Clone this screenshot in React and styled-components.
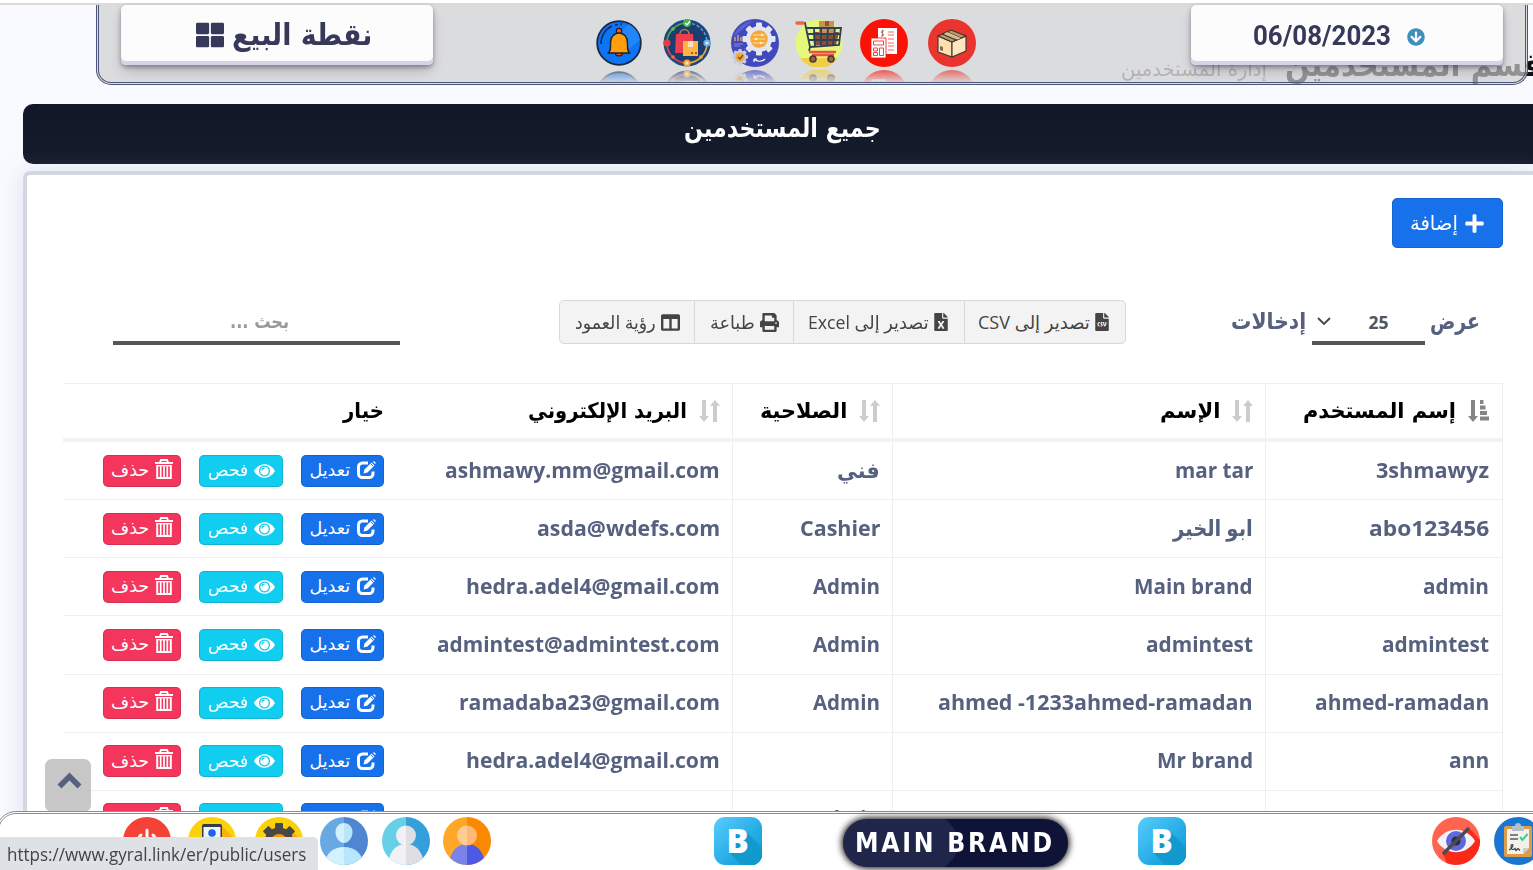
import React, { useLayoutEffect, useRef, useState } from "react";
import styled, { createGlobalStyle, css } from "styled-components";
import { FaPlus, FaFileCsv, FaFileExcel, FaPrint, FaColumns, FaArrowCircleDown, FaThLarge } from "react-icons/fa";

const Global = createGlobalStyle`
  *{box-sizing:border-box}
  html,body{margin:0;padding:0;overflow:hidden}
  body{font-family:"Open Sans","DejaVu Sans",sans-serif;background:#fff}
  svg{display:block;flex:none}
`;

/* Text set to a fixed measure, independent of the font's own widths */
const Measure = styled.span`
  display: inline-block;
  flex: none;
  direction: ltr;
  text-align: left;
  white-space: nowrap;
  width: ${(p) => p.$w}px;
`;
const Inner = styled.span`
  display: inline-block;
  transform-origin: left center;
  unicode-bidi: isolate;
`;
function Fit({ w, children, dir = "rtl" }) {
  const ref = useRef(null);
  const [scale, setScale] = useState(1);
  useLayoutEffect(() => {
    setScale(w / ref.current.offsetWidth);
  }, [w, children]);
  return (
    <Measure $w={w}>
      <Inner ref={ref} dir={dir} style={{ transform: `scaleX(${scale})` }}>{children}</Inner>
    </Measure>
  );
}

const Page = styled.div`
  position: relative;
  width: 1533px;
  height: 870px;
  overflow: hidden;
  background: #f8faff;
`;
const TopEdge = styled.div`
  position: absolute;
  inset: 0 0 auto 0;
  height: 5px;
  background: #dadadb;
  border-top: 3px solid #fff;
`;
const Header = styled.header`
  position: absolute;
  top: 5px;
  left: 96px;
  width: 1432px;
  height: 80px;
  display: flex;
  align-items: flex-start;
  border: 3px double #4d5578;
  border-top: 0;
  border-radius: 0 0 15px 15px;
  background: rgba(206, 206, 207, 0.69);
  padding: 0 22px;
`;
const HeaderButton = styled.div`
  width: 312px;
  height: 60px;
  flex: none;
  display: flex;
  align-items: center;
  justify-content: center;
  gap: ${(p) => p.$gap}px;
  padding: ${(p) => p.$pad};
  border-radius: 5px;
  background: #fcfcfd;
  color: #36395a;
  font: 700 ${(p) => p.$size}px/1 ${(p) => p.$family};
  box-shadow: rgba(45, 35, 66, 0.4) 0 2px 4px, rgba(45, 35, 66, 0.3) 0 7px 13px -3px, #d6d3e7 0 -4px 0 inset;
`;
const Shortcuts = styled.div`
  flex: 1;
  height: 77px;
  overflow: hidden;
  padding: 14px 0 0 162px;
  display: flex;
  align-items: flex-start;
  svg {
    -webkit-box-reflect: below 3px linear-gradient(to bottom, transparent 72%, rgba(0, 0, 0, 0.65) 100%);
  }
`;
const Spaced = styled.div`
  flex: none;
  margin-left: ${(p) => p.$l}px;
`;

const Crumbs = styled.div`
  height: 104px;
  display: flex;
  direction: rtl;
  align-items: flex-start;
  padding: 47px 0 0;
  margin-right: -9px;
  gap: 18px;
`;
const CrumbTitle = styled.h1`
  margin: 0;
  font: 700 32px/36px "DejaVu Sans", sans-serif;
  color: #111;
`;
const CrumbSub = styled.span`
  font: 400 20px/36px "DejaVu Sans", sans-serif;
  padding-top: 4px;
  color: #777;
`;
const Banner = styled.div`
  height: 60px;
  margin-left: 23px;
  border-radius: 10px 0 0 10px;
  background: linear-gradient(#101827, #151c2b);
  color: #fff;
  padding: 5px 0 0 661px;
  font: 700 26px/38px "DejaVu Sans", sans-serif;
`;
const Card = styled.section`
  margin: 7px 0 0 23px;
  height: 760px;
  border: 4px solid #d3d7e0;
  border-right: 0;
  border-radius: 7px 0 0 0;
  background: #fff;
  box-shadow: 0 0 26px rgba(130, 140, 190, 0.22);
  padding: 23px 30px 0 36px;
`;
const AddButton = styled.button`
  width: 111px;
  height: 50px;
  margin: 0 0 0 auto;
  padding: 0;
  display: flex;
  align-items: center;
  justify-content: center;
  gap: 6px;
  border: 1px solid #1464d4;
  border-radius: 5px;
  background: #1771ea;
  color: #fff;
  font: 400 20px/1 "DejaVu Sans", sans-serif;
`;
const Tools = styled.div`
  margin-top: 52px;
  height: 45px;
  display: flex;
  align-items: flex-start;
`;
const Search = styled.div`
  width: 287px;
  height: 45px;
  margin: 0 159px 0 50px;
  padding: 4px 0 0 117px;
  border-bottom: 4px solid #555;
  color: #999;
  font: 700 19px/34px "DejaVu Sans", sans-serif;
`;
const Exports = styled.div`
  display: flex;
  width: 567px;
  height: 44px;
  flex: none;
  border: 1px solid #d8d8d8;
  border-radius: 5px;
  background: #f3f3f3;
  color: #444;
  font: 400 18px/1 "Open Sans", "DejaVu Sans", sans-serif;
`;
const ExportButton = styled.div`
  width: ${(p) => p.$w}px;
  flex: none;
  display: flex;
  align-items: center;
  justify-content: flex-end;
  gap: ${(p) => p.$gap || 5}px;
  padding-right: 14px;
  & + & {
    border-left: 1px solid #d8d8d8;
  }
`;
const Length = styled.div`
  display: flex;
  margin-left: 105px;
  height: 45px;
  gap: 5.5px;
  color: #56607f;
  font: 700 23px/43px "DejaVu Sans", sans-serif;
`;
const Select = styled.div`
  width: 113px;
  height: 45px;
  display: flex;
  align-items: center;
  padding: 5px 36px 0 5px;
  justify-content: space-between;
  border-bottom: 4px solid #555;
  color: #555;
  font: 700 17.5px/1 "Open Sans", sans-serif;
  svg {
    margin-top: -4px;
  }
`;

const Table = styled.div`
  margin-top: 38px;
  width: 1440px;
  border-top: 1px solid #efeff1;
  border-right: 1px solid #f0f0f2;
`;
const Cell = styled.div`
  display: flex;
  align-items: center;
  justify-content: flex-end;
  gap: ${(p) => p.$gap || 12}px;
  padding: 0 12px 4px 0;
  border-right: ${(p) => (p.$plain ? 0 : 1)}px solid #efeff1;
  &:last-child {
    padding-right: 13px;
  }
`;
const Row = styled.div`
  display: grid;
  grid-template-columns: 333px 337px 160px 373px 237px;
  height: ${(p) => (p.$head ? 58 : 58.15)}px;
  border-bottom: ${(p) => (p.$head ? "4px solid #f3f3f4" : "1px solid #efeff1")};
  ${(p) =>
    p.$head
      ? css`
          color: #000;
          font: 700 21.5px/1 "DejaVu Sans", sans-serif;
          ${Cell} {
            padding-bottom: 0;
          }
        `
      : css`
          color: #56607f;
          font: 700 22px/1 "Open Sans", "DejaVu Sans", sans-serif;
        `}
`;
const Action = styled.div`
  width: ${(p) => p.$w}px;
  height: 32px;
  margin-top: 4px;
  display: flex;
  align-items: center;
  justify-content: center;
  gap: 6px;
  border: 1px solid rgba(0, 0, 0, 0.12);
  border-radius: 5px;
  background: ${(p) => p.$bg};
  color: #fff;
  font: 400 17.5px/1 "DejaVu Sans", sans-serif;
  svg {
    margin-top: ${(p) => p.$lift || 0}px;
  }
`;

const Footer = styled.footer`
  position: absolute;
  left: -4px;
  right: -20px;
  bottom: -10px;
  height: 69px;
  display: flex;
  align-items: flex-start;
  padding: 3px 0 0 2px;
  border: 3px double #8b8f94;
  border-radius: 20px 0 0 0;
  background: #fff;
`;
const Pill = styled.div`
  width: 225px;
  height: 48px;
  margin: 2px 0 0 81px;
  flex: none;
  display: flex;
  align-items: center;
  padding-left: 12px;
  border-radius: 24px;
  background: radial-gradient(ellipse 112px 50px at 4px 50%, #20264a 99%, transparent 100%), #0f1338;
  box-shadow: 0 0 7px 1px #000;
  color: #fff;
  font: 700 26px/1 "DejaVu Sans", sans-serif;
  letter-spacing: 3px;
`;
const ToTop = styled.div`
  position: absolute;
  left: 45px;
  top: 759px;
  width: 46px;
  height: 53px;
  padding: 13px 0 0 2px;
  display: flex;
  justify-content: center;
  border-radius: 7px;
  background: rgba(195, 195, 195, 0.93);
  color: #56607f;
`;
const Status = styled.div`
  position: absolute;
  left: 0;
  bottom: 0;
  width: 318px;
  height: 33px;
  padding-left: 7px;
  border-top-right-radius: 5px;
  background: #dee1e6;
  color: #404347;
  font: 400 18.5px/34px "Open Sans", sans-serif;
`;

const Svg = ({ children, s = 48 }) => (
  <svg width={s} height={s} viewBox="0 0 48 48">{children}</svg>
);

const Bell = () => (
  <Svg>
    <circle cx="24" cy="24" r="21.8" fill="#0d74f5" stroke="#172a42" strokeWidth="1.8" />
    <path d="M24 13 34 5a21 21 0 0 1 11 16L24 38Z" fill="#2f91ff" opacity=".6" />
    <path d="M6 25A19 19 0 0 1 17 7M20 6l3-.6M25 5h2" fill="none" stroke="#142a48" strokeWidth="1.5" />
    <circle cx="24" cy="12" r="2.7" fill="#f0563f" stroke="#222" strokeWidth="1.2" />
    <path d="M20 34a4.2 4.2 0 0 0 8 0Z" fill="#f0563f" stroke="#222" strokeWidth="1.2" />
    <path d="M13 34c3-2 2.500-5 2.500-10 0-6 3.500-10 8.500-10s8.500 4 8.500 10c0 5-.5 8 2.500 10Z" fill="#ff9f0f" stroke="#222" strokeWidth="1.4" strokeLinejoin="round" />
  </Svg>
);
const Bags = () => (
  <Svg>
    <circle cx="24" cy="24" r="23.5" fill="#21477d" />
    <circle cx="24" cy="24" r="20" fill="#1c3d70" />
    <path d="M4 24A20 20 0 0 1 24 4" fill="none" stroke="#4caf50" strokeWidth="1.5" />
    <path d="M24 4a20 20 0 0 1 20 20" fill="none" stroke="#5b9fe0" strokeWidth="1.5" strokeDasharray="3 2" />
    <path d="M44 24A20 20 0 0 1 24 44" fill="none" stroke="#f3b13e" strokeWidth="1.5" />
    <path d="M24 44A20 20 0 0 1 4 24" fill="none" stroke="#e8453c" strokeWidth="1.5" />
    <path d="M17 17v-2a4.500 4.500 0 0 1 9 0v2" fill="none" stroke="#b98045" strokeWidth="1.5" />
    <path d="M13 15h17l1 19H12Z" fill="#ee3d4e" />
    <path d="M20 22h15v15H20Z" fill="#ffb545" />
    <path d="M25 22h5v6h-5Z" fill="#fbe3b8" />
    <path d="M28 33h2v2h-2M32 33h2v2h-2" fill="#9b6426" />
    <circle cx="24" cy="4" r="4" fill="#43b649" />
    <path d="m22 4 2 2 3-4" stroke="#fff" strokeWidth="1.3" fill="none" />
    <circle cx="44" cy="24" r="3.6" fill="#66aef0" />
    <circle cx="44" cy="24" r="1.6" fill="#d8ebff" />
    <circle cx="4" cy="24" r="3.6" fill="#e5403c" />
    <circle cx="24" cy="44" r="3.6" fill="#f3a93a" />
    <circle cx="24" cy="44" r="1.6" fill="#ffe4a0" />
    <circle cx="10" cy="10" r="1.8" fill="#5bc25e" />
    <circle cx="38" cy="38" r="1.8" fill="#f3a93a" />
    <circle cx="10" cy="38" r="1.8" fill="#f07047" />
  </Svg>
);
const teeth = (cx, cy, r, n, w) =>
  Array.from({ length: n }, (_, i) => (
    <rect key={i} x={cx - w / 2} y={cy - r} width={w} height={r} rx="1" transform={`rotate(${(i * 360) / n} ${cx} ${cy})`} />
  ));
const Gears = () => (
  <Svg>
    <circle cx="24" cy="24" r="24" fill="#4149bd" />
    <path d="M5 16 21 2a24 24 0 0 0-19 17Z" fill="#5a62d1" />
    <g fill="#e3e5ef">{teeth(28, 20, 16.5, 8, 6)}<circle cx="28" cy="20" r="13" /></g>
    <circle cx="28" cy="20" r="8.7" fill="#f6a83a" />
    <path d="M22 16h12M22 20h12M22 24h12" stroke="#ffdb92" strokeWidth="1.2" />
    <circle cx="31" cy="16" r="1.3" fill="#fff0c8" /><circle cx="25" cy="20" r="1.3" fill="#fff0c8" /><circle cx="30" cy="24" r="1.3" fill="#fff0c8" />
    <g fill="#c9cde3">{teeth(9, 38, 8, 8, 3.5)}<circle cx="9" cy="38" r="6.4" /></g>
    <circle cx="9" cy="38" r="4.6" fill="#f6a83a" />
    <path d="m7 38 2 2 3-4" stroke="#754a18" strokeWidth="1.3" fill="none" />
    <path d="M4 22v-4M7 22v-6M10 22v-4" stroke="#d39c69" strokeWidth="1.6" /><path d="M3 25h9M3 27h6" stroke="#858add" />
    <path d="M23 40c3 3 8 3 11 0m-11 0v3m0-3h3" stroke="#fff" strokeWidth="1.2" fill="none" />
  </Svg>
);
const Cart = () => (
  <Svg>
    <circle cx="24" cy="24" r="23.5" fill="#e6f77c" />
    <path d="M5 39h38a23 23 0 0 1-38 0Z" fill="#f0cf45" />
    <path d="M18 13h26l-3 13H19Z" fill="#8f4e34" />
    <path d="M24 2h15v12H24Z" fill="#c79152" /><path d="M30 2h4v5h-4Z" fill="#8b5a31" />
    <path d="M2 4h8l5 24-1 4M11 9h35l-2 17-29 2M12 15h33M13 21h31M19 9l1 18M26 9v18M33 9l-1 18M40 9l-2 17" fill="none" stroke="#2d4157" strokeWidth="1.8" />
    <path d="M2 4h6" stroke="#ee6547" strokeWidth="3.4" strokeLinecap="round" />
    <path d="M14 33h27M17 36h22" stroke="#e9543f" strokeWidth="2.5" />
    <circle cx="18" cy="40" r="3" fill="#a06038" stroke="#433b42" strokeWidth="1.5" /><circle cx="36" cy="40" r="3" fill="#a06038" stroke="#433b42" strokeWidth="1.5" />
  </Svg>
);
const Invoice = () => (
  <Svg>
    <circle cx="24" cy="24" r="24" fill="#fb1206" />
    <path d="M18 9h19v26H18Z" fill="#fff" />
    <path d="M28 13h6M28 16h6M28 20h6M28 24h6M28 27h6M28 31h6" stroke="#fb6258" strokeWidth="1" />
    <path d="M24 12c-3-1-3.500 2-1.500 2.500s1.500 3-1.500 2.200M22.500 10.500v7" stroke="#a5746f" strokeWidth="1" fill="none" />
    <path d="M11 19h15v20H11Z" fill="#fff" stroke="#fb1206" strokeWidth=".8" />
    <path d="M13.500 22h10v4h-10ZM13.500 29h4v3h-4ZM13.500 33.500h4v3h-4ZM19.500 29h4v7.500h-4Z" fill="none" stroke="#fb4339" strokeWidth="1" />
  </Svg>
);
const Box = () => (
  <Svg>
    <circle cx="24" cy="24" r="24" fill="#e9352d" />
    <g stroke="#3d3430" strokeWidth="1.1" strokeLinejoin="round">
      <path d="m10 17 14 6v15l-14-5Z" fill="#ffdfad" /><path d="m24 23 14-6v15l-14 6Z" fill="#ffe7c0" />
      <path d="m10 17 13-6 15 6-14 6Z" fill="#b8996f" /><path d="m14 15 14 6M19 13l14 6" />
    </g>
    <path d="M19 13 16 15 30 20.500 33 19Z" fill="#d9be94" /><path d="m12 27 3 1v4l-3-1Z" fill="#7d6b57" />
  </Svg>
);
const Power = () => (
  <Svg>
    <circle cx="24" cy="24" r="24" fill="#f44336" />
    <path d="M24 13v12M18 18a9 9 0 1 0 12 0" fill="none" stroke="#fff" strokeWidth="3" strokeLinecap="round" />
  </Svg>
);
const Mobile = () => (
  <Svg>
    <circle cx="24" cy="24" r="24" fill="#fbd20a" />
    <path d="m34 9 14 14a24 24 0 0 1-24 25l-9-7Z" fill="#f7b20c" />
    <rect x="14" y="7" width="20" height="34" rx="2" fill="#333c48" /><path d="M15.500 10h17v26h-17Z" fill="#edf5ff" />
    <circle cx="24" cy="16" r="3.800" fill="#2461e8" /><path d="M18 26c0-8 12-8 12 0Z" fill="#2461e8" />
  </Svg>
);
const Cog = () => (
  <Svg>
    <circle cx="24" cy="24" r="24" fill="#fbd20a" /><path d="m36 13 12 12a24 24 0 0 1-24 23L13 37Z" fill="#f7a916" />
    <g fill="#494847">{teeth(24, 25, 19, 8, 8)}<circle cx="24" cy="25" r="14.5" /></g><circle cx="24" cy="25" r="8" fill="#ff9800" />
  </Svg>
);
function Person({ id, left, right, headL, headR, bodyL, bodyR, round }) {
  return (
    <Svg>
      <defs><clipPath id={id}><circle cx="24" cy="24" r="24" /></clipPath></defs>
      <g clipPath={`url(#${id})`}>
        <path d="M0 0h24v48H0Z" fill={left} /><path d="M24 0h24v48H24Z" fill={right} />
        {round ? (
          <><path d="M24 27C14 27 9 34 7 42L8 48h16Z" fill={bodyL} /><path d="M24 27c10 0 15 7 17 15l-1 6H24Z" fill={bodyR} />
            <path d="M24 8.500a10 10 0 0 0 0 20Z" fill={headL} /><path d="M24 8.500a10 10 0 0 1 0 20Z" fill={headR} /></>
        ) : (
          <><path d="M24 30C13 30 6 36 4 48h20Z" fill={bodyL} /><path d="M24 30c11 0 18 6 20 18H24Z" fill={bodyR} />
            <path d="M24 6c-5 0-8.500 4-8.500 9S19 26 24 26Z" fill={headL} /><path d="M24 6c5 0 8.500 4 8.500 9S29 26 24 26Z" fill={headR} /></>
        )}
      </g>
    </Svg>
  );
}
const longShadow = Array.from({ length: 22 }, (_, i) => `${i + 1}px ${i + 1}px #129acf`).join(",");
const BadgeBox = styled.div`
  width: 48px;
  height: 48px;
  flex: none;
  overflow: hidden;
  margin-left: ${(p) => p.$l}px;
  border-radius: 11px;
  background: linear-gradient(135deg, #5accfd, #1fa9e2 65%, #1299d3);
  display: flex;
  align-items: center;
  justify-content: center;
  color: #fff;
  font: 800 33px/1 "Open Sans", sans-serif;
  text-shadow: ${longShadow};
  padding: 0 1px 2px 0;
`;
const HiddenEye = () => (
  <Svg>
    <circle cx="24" cy="24" r="24" fill="#ff6450" /><path d="m38 12 10 11a24 24 0 0 1-33 23l-4-9Z" fill="#fb2a18" />
    <path d="M5 24c9-15 29-15 38 0-9 15-29 15-38 0Z" fill="#f4f4f6" />
    <circle cx="24" cy="24" r="10" fill="#6068e0" /><circle cx="24" cy="24" r="4.5" fill="#2a2c42" />
    <path d="M12 36 36 12" stroke="#4c4b52" strokeWidth="3.5" strokeLinecap="round" />
  </Svg>
);
const Clipboard = () => (
  <Svg>
    <circle cx="24" cy="24" r="24" fill="#1976d2" />
    <rect x="10" y="9" width="28" height="31" rx="2" fill="#dc9c48" /><path d="M13 12h22v19l-6 6H13Z" fill="#f4f1ea" /><path d="m29 37 6-6h-6Z" fill="#cfccc5" />
    <path d="M18 9h3a3 3 0 0 1 6 0h3v5H18Z" fill="#b4bfc8" />
    <path d="M16 18h8M16 22h8" stroke="#505d69" strokeWidth="1.6" /><path d="m26 20 2.500 3 5-6" fill="none" stroke="#43c88d" strokeWidth="2" />
    <path d="M15 33c4-2 5-6 3-5.500s-1 7.500 3 4l1 2 2-2 2 2" fill="none" stroke="#333" strokeWidth="1.1" />
  </Svg>
);

const SortBoth = () => (
  <svg width="21" height="22" viewBox="0 0 21 22" fill="#ccc">
    <path d="M3 0h4v16h3L5 22 0 16h3ZM14 22V6h-3L16 0l5 6h-3v16Z" />
  </svg>
);
const SortActive = () => (
  <svg width="21" height="22" viewBox="0 0 21 22" fill="#858585">
    <path d="M3 0h4v16h3L5 22 0 16h3ZM12 0h3.500v4H12ZM12 5.500h5.500v4H12ZM12 11h7v4h-7ZM12 16.500h9v4h-9Z" />
  </svg>
);
const EditIcon = () => (
  <svg width="19" height="18" viewBox="0 0 19 18" fill="none" stroke="#fff">
    <path d="M11 2H5.500A4 4 0 0 0 1.500 6v6.500a4 4 0 0 0 4 4h6.500a4 4 0 0 0 4-4V10.500" strokeWidth="3" />
    <path d="m6.500 12.500 1-4 7-7 3 3-7 7Z" fill="#fff" stroke="none" /><path d="m13.500 2.500 3 3" stroke="#1771ea" strokeWidth=".9" /><path d="m16 1 1-1 2 2-1 1Z" fill="#fff" stroke="none" />
  </svg>
);
const EyeIcon = () => (
  <svg width="21" height="14" viewBox="0 0 21 14">
    <path d="M0 7C5-2 16-2 21 7 16 16 5 16 0 7Z" fill="#fff" /><circle cx="10.5" cy="7" r="4.9" fill="none" stroke="#12cbee" strokeWidth="1.3" /><path d="M8 6.500a2.500 2.500 0 0 1 2.500-2.300" fill="none" stroke="#12cbee" strokeWidth="1.2" />
  </svg>
);
const TrashIcon = () => (
  <svg width="18" height="20" viewBox="0 0 18 20" fill="none" stroke="#fff">
    <path d="M5 3.500 6 1h6l1 2.500" strokeWidth="2" /><path d="M0 4h18" strokeWidth="2" />
    <path d="M2.200 6v13h13.600V6" strokeWidth="2" /><path d="M5.700 7v11M9 7v11M12.300 7v11" strokeWidth="1.700" /><path d="M1.500 6.700h15" strokeWidth="1.400" />
  </svg>
);

const rows = [
  ["ashmawy.mm@gmail.com", 275, "فني", 43, "mar tar", 78, "3shmawyz", 113],
  ["asda@wdefs.com", 183, "Cashier", 80, "ابو الخير", 80, "abo123456", 120],
  ["hedra.adel4@gmail.com", 254, "Admin", 67, "Main brand", 119, "admin", 66],
  ["admintest@admintest.com", 283, "Admin", 67, "admintest", 107, "admintest", 107],
  ["ramadaba23@gmail.com", 261, "Admin", 67, "ahmed -1233ahmed-ramadan", 315, "ahmed-ramadan", 174],
  ["hedra.adel4@gmail.com", 254, "", 0, "Mr brand", 96, "ann", 40],
  ["", 0, "Admin", 67, "", 0, "", 0],
];
const T = ({ t, w }) => (t ? <Fit w={w} dir={/[A-Za-z]/.test(t) ? "ltr" : "rtl"}>{t}</Fit> : null);

export default function App() {
  return (
    <Page>
      <Global />
      <Crumbs>
        <CrumbTitle><Fit w={257}>قسم المستخدمين</Fit></CrumbTitle>
        <CrumbSub><Fit w={146}>إدارة المستخدمين</Fit></CrumbSub>
      </Crumbs>
      <Banner><Fit w={197}>جميع المستخدمين</Fit></Banner>
      <Card>
        <AddButton><Fit w={48}>إضافة</Fit><FaPlus size={21} /></AddButton>
        <Tools>
          <Search><Fit w={59}>بحث ...</Fit></Search>
          <Exports>
            <ExportButton $w={134}><Fit w={81}>رؤية العمود</Fit><FaColumns size={19} /></ExportButton>
            <ExportButton $w={99}><Fit w={45}>طباعة</Fit><FaPrint size={19} /></ExportButton>
            <ExportButton $w={171} $gap={3}><Fit w={121}>تصدير إلى Excel</Fit><FaFileExcel size={18} /></ExportButton>
            <ExportButton $w={161} $gap={3}><Fit w={112}>تصدير إلى CSV</Fit><FaFileCsv size={18} /></ExportButton>
          </Exports>
          <Length>
            <Fit w={75}>إدخالات</Fit>
            <Select>
              <svg width="14" height="9" viewBox="0 0 14 9" fill="none" stroke="#444" strokeWidth="1.8"><path d="m1 1 6 6 6-6" /></svg>
              <Fit w={20} dir="ltr">25</Fit>
            </Select>
            <Fit w={50}>عرض</Fit>
          </Length>
        </Tools>
        <Table>
          <Row $head>
            <Cell $plain><Fit w={41}>خيار</Fit></Cell>
            <Cell><Fit w={159}>البريد الإلكتروني</Fit><SortBoth /></Cell>
            <Cell><Fit w={87}>الصلاحية</Fit><SortBoth /></Cell>
            <Cell><Fit w={60}>الإسم</Fit><SortBoth /></Cell>
            <Cell><Fit w={153}>إسم المستخدم</Fit><SortActive /></Cell>
          </Row>
          {rows.map((r, i) => (
            <Row key={i}>
              <Cell $plain $gap={18}>
                <Action $w={78} $bg="#f5365c" $lift={-4}><Fit w={38}>حذف</Fit><TrashIcon /></Action>
                <Action $w={84} $bg="#11cdef"><Fit w={40}>فحص</Fit><EyeIcon /></Action>
                <Action $w={83} $bg="#1771ea" $lift={-1}><Fit w={41}>تعديل</Fit><EditIcon /></Action>
              </Cell>
              <Cell><T t={r[0]} w={r[1]} /></Cell>
              <Cell><T t={r[2]} w={r[3]} /></Cell>
              <Cell><T t={r[4]} w={r[5]} /></Cell>
              <Cell><T t={r[6]} w={r[7]} /></Cell>
            </Row>
          ))}
        </Table>
      </Card>

      <TopEdge />
      <Header>
        <HeaderButton $gap={8} $pad="0 0 0 14px" $size={30} $family={'"DejaVu Sans", sans-serif'}>
          <FaThLarge size={28} /><Fit w={140}>نقطة البيع</Fit>
        </HeaderButton>
        <Shortcuts>
          <Bell />
          <Spaced $l={20}><Bags /></Spaced>
          <Spaced $l={20}><Gears /></Spaced>
          <Spaced $l={16}><Cart /></Spaced>
          <Spaced $l={17}><Invoice /></Spaced>
          <Spaced $l={20}><Box /></Spaced>
        </Shortcuts>
        <HeaderButton $gap={16} $pad="3px 17px 0 0" $size={27} $family={"Roboto, sans-serif"}>
          <Fit w={138} dir="ltr">06/08/2023</Fit><FaArrowCircleDown size={18} color="#3f8fbd" />
        </HeaderButton>
      </Header>

      <ToTop>
        <svg width="25" height="17" viewBox="0 0 25 17" fill="none" stroke="currentColor" strokeWidth="5.5"><path d="m2.500 14.500 10-10 10 10" /></svg>
      </ToTop>
      <Footer>
        <Spaced $l={122}><Power /></Spaced>
        <Spaced $l={17}><Mobile /></Spaced>
        <Spaced $l={19}><Cog /></Spaced>
        <Spaced $l={17}><Person id="visitor" left="#68a9e4" right="#4f86d2" headL="#d3f1ff" headR="#b8e7fb" bodyL="#d3f1ff" bodyR="#b8e7fb" /></Spaced>
        <Spaced $l={14}><Person id="supplier" round left="#67cfe8" right="#349fdb" headL="#f1f1f4" headR="#dedee3" bodyL="#f1f1f4" bodyR="#dedee3" /></Spaced>
        <Spaced $l={13}><Person id="customer" round left="#ffa726" right="#fb8900" headL="#ffcc91" headR="#ffb875" bodyL="#7a83e9" bodyR="#4d58e4" /></Spaced>
        <BadgeBox $l={223}>B</BadgeBox>
        <Pill><Fit w={200} dir="ltr">MAIN BRAND</Fit></Pill>
        <BadgeBox $l={70}>B</BadgeBox>
        <Spaced $l={246}><HiddenEye /></Spaced>
        <Spaced $l={14}><Clipboard /></Spaced>
      </Footer>
      <Status><Fit w={299} dir="ltr">https://www.gyral.link/er/public/users</Fit></Status>
    </Page>
  );
}
